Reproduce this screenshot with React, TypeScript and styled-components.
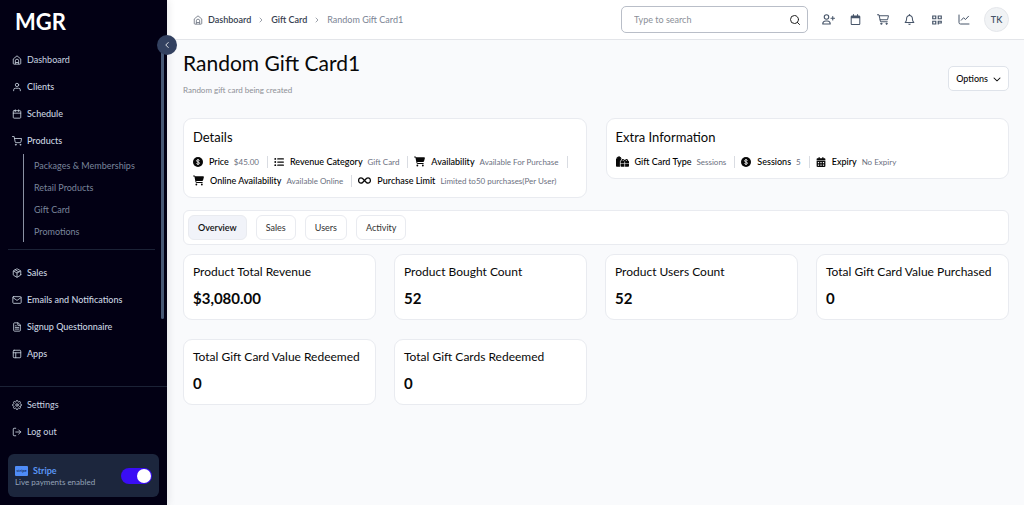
import React from "react";
import styled, { createGlobalStyle, css } from "styled-components";
import {
  FiUser, FiCalendar, FiShoppingCart, FiMail, FiFileText, FiLayout, FiPackage, FiSettings, FiLogOut, FiChevronLeft, FiChevronRight,
} from "react-icons/fi";
import {
  FaRegBell, FaRegCalendar, FaInfinity, FaCartShopping, FaListUl, FaCalendarDays, FaGifts, FaChevronDown,
} from "react-icons/fa6";
import { LuSearch } from "react-icons/lu";

const Global = createGlobalStyle`
  *, *::before, *::after { box-sizing: border-box; }
  body { margin: 0; font-family: Lato, "Noto Sans", sans-serif; color: #080808; background: #f9fafc; }
  button, input { font: inherit; color: inherit; }
  h1, h2, h3, p, ul, ol, dl, dd { margin: 0; padding: 0; }
  ul, ol { list-style: none; }
  a { color: inherit; text-decoration: none; }
`;

const Shell = styled.div`
  display: grid;
  grid-template-columns: 167px 1fr;
  min-height: 100vh;
`;

const Sidebar = styled.aside`
  position: sticky;
  top: 0;
  z-index: 1;
  height: 100vh;
  display: flex;
  flex-direction: column;
  background: #020014;
  color: #cbd5e1;
  font-size: 9px;
  box-shadow: 1px 0 8px rgba(15, 23, 42, 0.1);
`;

const Brand = styled.div`
  padding: 8px 15px 0;
  height: 46px;
  color: #fff;
  font-size: 22px;
  line-height: 28px;
  font-weight: 700;
`;

const CollapseButton = styled.button`
  position: absolute;
  top: 35px;
  right: -10px;
  z-index: 2;
  width: 20px;
  height: 20px;
  display: grid;
  place-items: center;
  padding: 0;
  border: 0;
  border-radius: 50%;
  background: #334160;
  color: #fff;
`;

const Scroller = styled.div`
  flex: 1;
  min-height: 0;
  display: flex;
  padding-right: 3px;
`;

const Track = styled.div`
  width: 3px;
  height: 273px;
  border-radius: 2px;
  background: #475875;
`;

const MainNav = styled.nav`
  flex: 1;
  padding-right: 6px;
`;

const NavLink = styled.a<{ $medium?: boolean }>`
  display: flex;
  align-items: center;
  gap: 5px;
  height: 27px;
  padding-left: 12px;
  font-weight: ${(p) => (p.$medium ? 500 : 400)};
  svg { width: 10px; height: 10px; flex: none; }
`;

const SubList = styled.ul`
  margin: 0 0 0 23px;
  padding-left: 10px;
  border-left: 1px solid #8a91a3;
  color: #7a859c;
`;

const SubItem = styled.li`
  height: 22px;
  display: flex;
  align-items: center;
`;

const Divider = styled.hr`
  margin: 7px 0 9px 8px;
  border: 0;
  border-top: 1px solid #1b2236;
`;

const FooterNav = styled.nav`
  padding-top: 4px;
  border-top: 1px solid #1b2236;
`;

const StripeCard = styled.section`
  display: flex;
  align-items: center;
  justify-content: space-between;
  height: 43px;
  margin: 9px 8px 8px;
  padding: 0 7px;
  border-radius: 6px;
  background: #1c263d;
  font-size: 8px;
  line-height: 10px;
  color: #94a3b8;
`;

const StripeName = styled.div`
  display: flex;
  align-items: center;
  gap: 5px;
  color: #5a95f5;
  font-size: 9px;
  line-height: 12px;
  font-weight: 700;
`;

const StripeMark = styled.span`
  width: 13px;
  height: 10px;
  border-radius: 1px;
  background: #4f8cf7;
  color: #16306b;
  font-size: 4px;
  line-height: 10px;
  font-weight: 700;
  text-align: center;
`;

const Switch = styled.input`
  appearance: none;
  width: 31px;
  height: 16px;
  margin: 0;
  padding: 1px;
  border-radius: 8px;
  background: #3a0df5;
  &::after {
    content: "";
    display: block;
    width: 14px;
    height: 14px;
    margin-left: auto;
    border-radius: 50%;
    background: #fff;
  }
`;

const Page = styled.div`
  min-width: 0;
`;

const TopBar = styled.header`
  display: flex;
  align-items: center;
  justify-content: space-between;
  height: 40px;
  padding: 0 15px 0 26px;
  border-bottom: 1px solid #e3e5e9;
  background: #fff;
`;

const Crumbs = styled.ol`
  display: flex;
  align-items: center;
  gap: 6px;
  font-size: 9px;
  color: #7b8494;
  svg { display: block; width: 8px; height: 8px; }
`;

const Crumb = styled.li<{ $strong?: boolean }>`
  display: flex;
  align-items: center;
  gap: 5px;
  ${(p) => p.$strong && css`font-weight: 600; color: #374151;`}
  svg { width: 10px; height: 10px; color: #6b7280; }
`;

const Separator = styled.li`
  color: #6b7280;
`;

const Tools = styled.div`
  display: flex;
  align-items: center;
  gap: 14px;
`;

const SearchBox = styled.label`
  display: flex;
  align-items: center;
  width: 187px;
  height: 27px;
  padding: 0 6px 0 12px;
  border: 1px solid #b9bec8;
  border-radius: 5px;
  svg { width: 12px; height: 12px; flex: none; color: #222; }
`;

const SearchInput = styled.input`
  flex: 1;
  min-width: 0;
  padding: 0;
  border: 0;
  outline: 0;
  background: none;
  font-size: 9px;
  &::placeholder { color: #8b8f98; opacity: 1; }
`;

const IconButton = styled.button`
  width: 13px;
  height: 16px;
  display: grid;
  place-items: center;
  padding: 0;
  border: 0;
  background: none;
  color: #475569;
`;

const Avatar = styled.button`
  width: 25px;
  height: 25px;
  padding: 0;
  border: 1px solid #e5e7eb;
  border-radius: 50%;
  background: #f1f3f5;
  color: #475569;
  font-size: 9px;
  font-weight: 600;
`;

const Content = styled.main`
  padding: 9px 15px 24px 16px;
`;

const Heading = styled.div`
  display: flex;
  align-items: center;
  justify-content: space-between;
  margin-bottom: 10px;
`;

const HeadingText = styled.div`
  padding-bottom: 11px;
`;

const Title = styled.h1`
  font-size: 21px;
  line-height: 28px;
  font-weight: 400;
`;

const Subtitle = styled.p`
  margin-top: 6px;
  font-size: 8px;
  line-height: 14px;
  color: #8e9096;
`;

const OptionsButton = styled.button`
  display: flex;
  align-items: center;
  gap: 5px;
  height: 25px;
  padding: 0 7px;
  border: 1px solid #dfe3ea;
  border-radius: 5px;
  background: #fff;
  font-size: 9px;
  font-weight: 500;
  svg { width: 8px; height: 8px; }
`;

const Panels = styled.div`
  display: grid;
  grid-template-columns: 1fr 1fr;
  align-items: start;
  gap: 19px;
`;

const Card = styled.section`
  padding: 9px;
  border: 1px solid #e9ebf0;
  border-radius: 9px;
  background: #fff;
`;

const Panel = styled(Card)`
  padding-bottom: 7px;
`;

const PanelTitle = styled.h2`
  font-size: 13px;
  line-height: 18px;
  font-weight: 400;
`;

const Facts = styled.dl`
  display: flex;
  flex-wrap: wrap;
  margin-top: 6px;
`;

const Fact = styled.div`
  display: flex;
  align-items: center;
  height: 19px;
  font-size: 9px;
  svg { margin-right: 6px; flex: none; }
  dt { color: #000; font-weight: 500; }
  dd { margin-left: 5px; font-size: 8px; color: #6b7080; }
  &::after { content: ""; width: 1px; height: 12px; margin: 0 6px 0 8px; background: #d9dce2; }
  &:last-child::after { display: none; }
`;

const Tabs = styled.div`
  display: flex;
  gap: 9px;
  margin: 12px 0 9px;
  padding: 4px;
  border: 1px solid #e9ebf0;
  border-radius: 6px;
  background: #fff;
`;

const Tab = styled.button<{ $active?: boolean }>`
  height: 25px;
  padding: 0 9px;
  border: 1px solid #e9ebf0;
  border-radius: 6px;
  background: ${(p) => (p.$active ? "#f1f3f9" : "#fff")};
  color: ${(p) => (p.$active ? "#111" : "#333")};
  font-size: 9px;
  font-weight: ${(p) => (p.$active ? 600 : 400)};
`;

const Stats = styled.div`
  display: grid;
  grid-template-columns: repeat(4, 1fr);
  gap: 19px 18px;
`;

const StatName = styled.h3`
  font-size: 12px;
  line-height: 16px;
  font-weight: 400;
  white-space: nowrap;
`;

const StatValue = styled.p`
  margin: 8px 0 2px;
  font-size: 15px;
  line-height: 20px;
  font-weight: 700;
`;

const HomeIcon = () => (
  <svg width="10" height="10" viewBox="0 0 24 24" fill="none" stroke="currentColor" strokeWidth="2" strokeLinejoin="round" aria-hidden="true">
    <path d="M3 9.5 12 2l9 7.5V20a2 2 0 0 1-2 2H5a2 2 0 0 1-2-2z" />
    <path d="M8 22v-8a4 4 0 0 1 8 0v8M8 18h8" />
  </svg>
);

const DollarIcon = () => (
  <svg width="10" height="10" viewBox="0 0 20 20" aria-hidden="true">
    <circle cx="10" cy="10" r="10" fill="currentColor" />
    <path d="M13 7.2C12.500 6 11.300 5.600 10 5.600c-1.800 0-3 .8-3 2.100 0 3 6 1.600 6 4.500 0 1.400-1.200 2.200-3 2.200-1.500 0-2.700-.6-3.100-1.800M10 4v12" fill="none" stroke="#fff" strokeWidth="1.700" />
  </svg>
);

const UserPlusIcon = () => (
  <svg width="13" height="11" viewBox="0 0 26 22" fill="none" stroke="currentColor" strokeWidth="2.200" strokeLinecap="round" strokeLinejoin="round" aria-hidden="true">
    <circle cx="9" cy="6" r="4.500" />
    <path d="M1.500 20c0-4 2.500-6 6-6h3c3.500 0 6 2 6 6zM21.500 5v7M18 8.500h7" />
  </svg>
);

const CartIcon = () => (
  <svg width="12" height="11" viewBox="0 0 24 22" fill="none" stroke="currentColor" strokeWidth="2" strokeLinecap="round" strokeLinejoin="round" aria-hidden="true">
    <path d="M1 1.500h3L7 15.500h13.500M4.500 3.500H23l-2 8H6.200" />
    <circle cx="8.500" cy="19.500" r="1.200" fill="currentColor" />
    <circle cx="19" cy="19.500" r="1.200" fill="currentColor" />
  </svg>
);

const QrIcon = () => (
  <svg width="10" height="10" viewBox="0 0 20 20" fill="none" stroke="currentColor" strokeWidth="2.400" aria-hidden="true">
    <path d="M1.500 2h6v5.500h-6zM12.500 2h6v5.500h-6zM1.500 12.500h6V18h-6z" />
    <path d="M12.500 19v-6.500h6v3.500h-5" />
  </svg>
);

const ChartIcon = () => (
  <svg width="12" height="11" viewBox="0 0 24 22" fill="none" stroke="currentColor" strokeWidth="2" strokeLinecap="round" strokeLinejoin="round" aria-hidden="true">
    <path d="M2 2v15a3 3 0 0 0 3 3h17M6.500 12.500l4.500-5 4 3.500 6-6.500" />
  </svg>
);

const products = ["Packages & Memberships", "Retail Products", "Gift Card", "Promotions"];

const stats = [
  ["Product Total Revenue", "$3,080.00"],
  ["Product Bought Count", "52"],
  ["Product Users Count", "52"],
  ["Total Gift Card Value Purchased", "0"],
  ["Total Gift Card Value Redeemed", "0"],
  ["Total Gift Cards Redeemed", "0"],
];

const details: [React.ReactNode, string, string][] = [
  [<DollarIcon />, "Price", "$45.00"],
  [<FaListUl size={10} />, "Revenue Category", "Gift Card"],
  [<FaCartShopping size={11} />, "Availability", "Available For Purchase"],
  [<FaCartShopping size={11} />, "Online Availability", "Available Online"],
  [<FaInfinity size={13} />, "Purchase Limit", "Limited to50 purchases(Per User)"],
];

const extra: [React.ReactNode, string, string][] = [
  [<FaGifts size={13} />, "Gift Card Type", "Sessions"],
  [<DollarIcon />, "Sessions", "5"],
  [<FaCalendarDays size={10} />, "Expiry", "No Expiry"],
];

const FactList = ({ items }: { items: [React.ReactNode, string, string][] }) => (
  <Facts>
    {items.map(([icon, name, value]) => (
      <Fact key={name}>{icon}<dt>{name}</dt><dd>{value}</dd></Fact>
    ))}
  </Facts>
);

export default function App() {
  return (
    <>
      <Global />
      <Shell>
        <Sidebar>
          <Brand>MGR</Brand>
          <CollapseButton aria-label="Collapse sidebar"><FiChevronLeft size={10} /></CollapseButton>
          <Scroller>
            <MainNav>
              <NavLink href="#"><HomeIcon />Dashboard</NavLink>
              <NavLink href="#" $medium><FiUser />Clients</NavLink>
              <NavLink href="#" $medium><FiCalendar />Schedule</NavLink>
              <NavLink href="#" $medium><FiShoppingCart />Products</NavLink>
              <SubList>
                {products.map((p) => <SubItem key={p}><a href="#">{p}</a></SubItem>)}
              </SubList>
              <Divider />
              <NavLink href="#" $medium><FiPackage />Sales</NavLink>
              <NavLink href="#" $medium><FiMail />Emails and Notifications</NavLink>
              <NavLink href="#" $medium><FiFileText />Signup Questionnaire</NavLink>
              <NavLink href="#" $medium><FiLayout />Apps</NavLink>
            </MainNav>
            <Track />
          </Scroller>
          <FooterNav>
            <NavLink href="#"><FiSettings />Settings</NavLink>
            <NavLink href="#"><FiLogOut />Log out</NavLink>
          </FooterNav>
          <StripeCard>
            <div>
              <StripeName><StripeMark>stripe</StripeMark>Stripe</StripeName>
              <label htmlFor="live">Live payments enabled</label>
            </div>
            <Switch id="live" type="checkbox" defaultChecked />
          </StripeCard>
        </Sidebar>
        <Page>
          <TopBar>
            <Crumbs>
              <Crumb $strong><HomeIcon /><a href="#">Dashboard</a></Crumb>
              <Separator aria-hidden="true"><FiChevronRight /></Separator>
              <Crumb $strong><a href="#">Gift Card</a></Crumb>
              <Separator aria-hidden="true"><FiChevronRight /></Separator>
              <Crumb>Random Gift Card1</Crumb>
            </Crumbs>
            <Tools>
              <SearchBox>
                <SearchInput type="text" placeholder="Type to search" aria-label="Search" />
                <LuSearch />
              </SearchBox>
              <IconButton aria-label="Add client"><UserPlusIcon /></IconButton>
              <IconButton aria-label="Calendar"><FaRegCalendar size={11} /></IconButton>
              <IconButton aria-label="Cart"><CartIcon /></IconButton>
              <IconButton aria-label="Notifications"><FaRegBell size={11} /></IconButton>
              <IconButton aria-label="QR code"><QrIcon /></IconButton>
              <IconButton aria-label="Reports"><ChartIcon /></IconButton>
              <Avatar>TK</Avatar>
            </Tools>
          </TopBar>
          <Content>
            <Heading>
              <HeadingText>
                <Title>Random Gift Card1</Title>
                <Subtitle>Random gift card being created</Subtitle>
              </HeadingText>
              <OptionsButton>Options<FaChevronDown /></OptionsButton>
            </Heading>
            <Panels>
              <Panel><PanelTitle>Details</PanelTitle><FactList items={details} /></Panel>
              <Panel><PanelTitle>Extra Information</PanelTitle><FactList items={extra} /></Panel>
            </Panels>
            <Tabs role="tablist">
              {["Overview", "Sales", "Users", "Activity"].map((t, i) => (
                <Tab key={t} role="tab" aria-selected={i === 0} $active={i === 0}>{t}</Tab>
              ))}
            </Tabs>
            <Stats>
              {stats.map(([name, value]) => (
                <Card key={name}><StatName>{name}</StatName><StatValue>{value}</StatValue></Card>
              ))}
            </Stats>
          </Content>
        </Page>
      </Shell>
    </>
  );
}
